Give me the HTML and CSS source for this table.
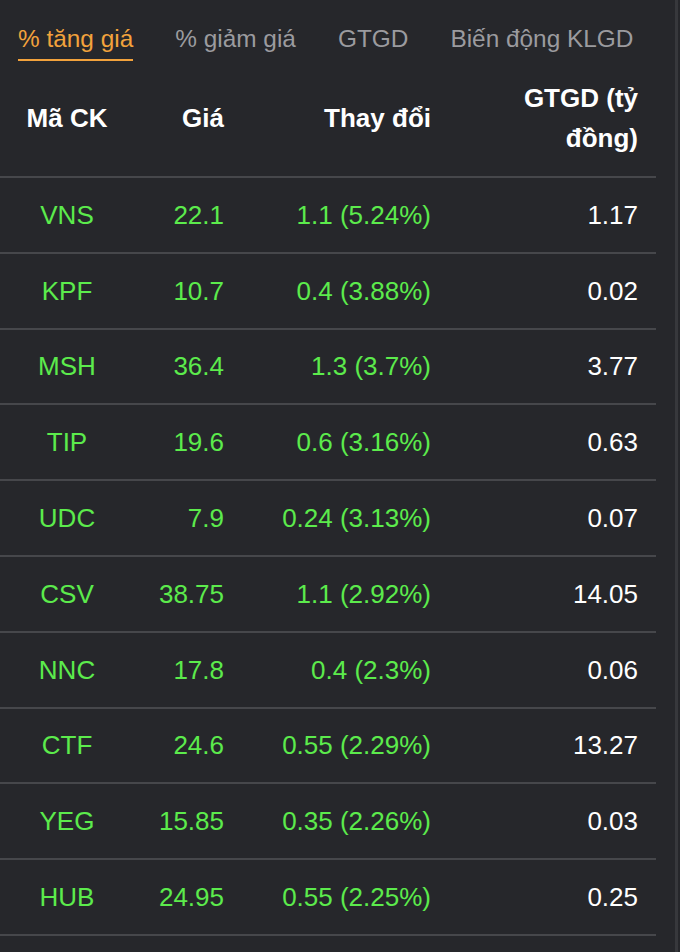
FILE: index.html
```html
<!DOCTYPE html>
<html lang="vi">
<head>
<meta charset="utf-8">
<title>Top cổ phiếu</title>
<link rel="stylesheet" href="styles.css">
</head>
<body>
<div class="page">
  <nav class="tabs">
    <span class="tab active">% tăng giá</span>
    <span class="tab">% giảm giá</span>
    <span class="tab">GTGD</span>
    <span class="tab">Biến động KLGD</span>
  </nav>
  <div class="table">
    <div class="row head">
      <div class="cell c1">Mã CK</div>
      <div class="cell">Giá</div>
      <div class="cell">Thay đổi</div>
      <div class="cell">GTGD (tỷ đồng)</div>
    </div>
    <div class="row"><div class="cell c1 up">VNS</div><div class="cell up">22.1</div><div class="cell up">1.1 (5.24%)</div><div class="cell val">1.17</div></div>
    <div class="row"><div class="cell c1 up">KPF</div><div class="cell up">10.7</div><div class="cell up">0.4 (3.88%)</div><div class="cell val">0.02</div></div>
    <div class="row"><div class="cell c1 up">MSH</div><div class="cell up">36.4</div><div class="cell up">1.3 (3.7%)</div><div class="cell val">3.77</div></div>
    <div class="row"><div class="cell c1 up">TIP</div><div class="cell up">19.6</div><div class="cell up">0.6 (3.16%)</div><div class="cell val">0.63</div></div>
    <div class="row"><div class="cell c1 up">UDC</div><div class="cell up">7.9</div><div class="cell up">0.24 (3.13%)</div><div class="cell val">0.07</div></div>
    <div class="row"><div class="cell c1 up">CSV</div><div class="cell up">38.75</div><div class="cell up">1.1 (2.92%)</div><div class="cell val">14.05</div></div>
    <div class="row"><div class="cell c1 up">NNC</div><div class="cell up">17.8</div><div class="cell up">0.4 (2.3%)</div><div class="cell val">0.06</div></div>
    <div class="row"><div class="cell c1 up">CTF</div><div class="cell up">24.6</div><div class="cell up">0.55 (2.29%)</div><div class="cell val">13.27</div></div>
    <div class="row"><div class="cell c1 up">YEG</div><div class="cell up">15.85</div><div class="cell up">0.35 (2.26%)</div><div class="cell val">0.03</div></div>
    <div class="row"><div class="cell c1 up">HUB</div><div class="cell up">24.95</div><div class="cell up">0.55 (2.25%)</div><div class="cell val">0.25</div></div>
  </div>
</div>
</body>
</html>
```
FILE: styles.css
```css
html, body {
  margin: 0;
  padding: 0;
  background: #26272b;
}
body {
  font-family: "Liberation Sans", Arial, Helvetica, sans-serif;
  color: #ffffff;
}
.page {
  width: 675px;
  height: 952px;
  border-right: 3px solid #37383c;
  overflow: hidden;
}
.tabs {
  display: flex;
  gap: 42px;
  padding: 25px 0 0 18px;
}
.tab {
  font-size: 24.4px;
  line-height: 28px;
  color: #9b9b9f;
  padding-bottom: 6px;
  border-bottom: 2px solid transparent;
  white-space: nowrap;
}
.tab.active {
  color: #f2a23c;
  border-bottom-color: #f2a23c;
}
.table {
  width: 656px;
  margin-top: 0;
}
.row {
  display: grid;
  grid-template-columns: 134px 108px 207px 207px;
  align-items: center;
  height: 73.8px;
  border-bottom: 2px solid #46474b;
  font-size: 26px;
  line-height: 30px;
}
.row.head {
  height: auto;
  padding: 17px 0 18px;
  font-weight: bold;
  line-height: 40px;
}
.cell {
  text-align: right;
  padding: 0 18px;
  white-space: normal;
}
.cell.c1 {
  text-align: center;
  padding: 0;
}
.up {
  color: #5ceb4c;
}
.val {
  color: #ffffff;
}
```
